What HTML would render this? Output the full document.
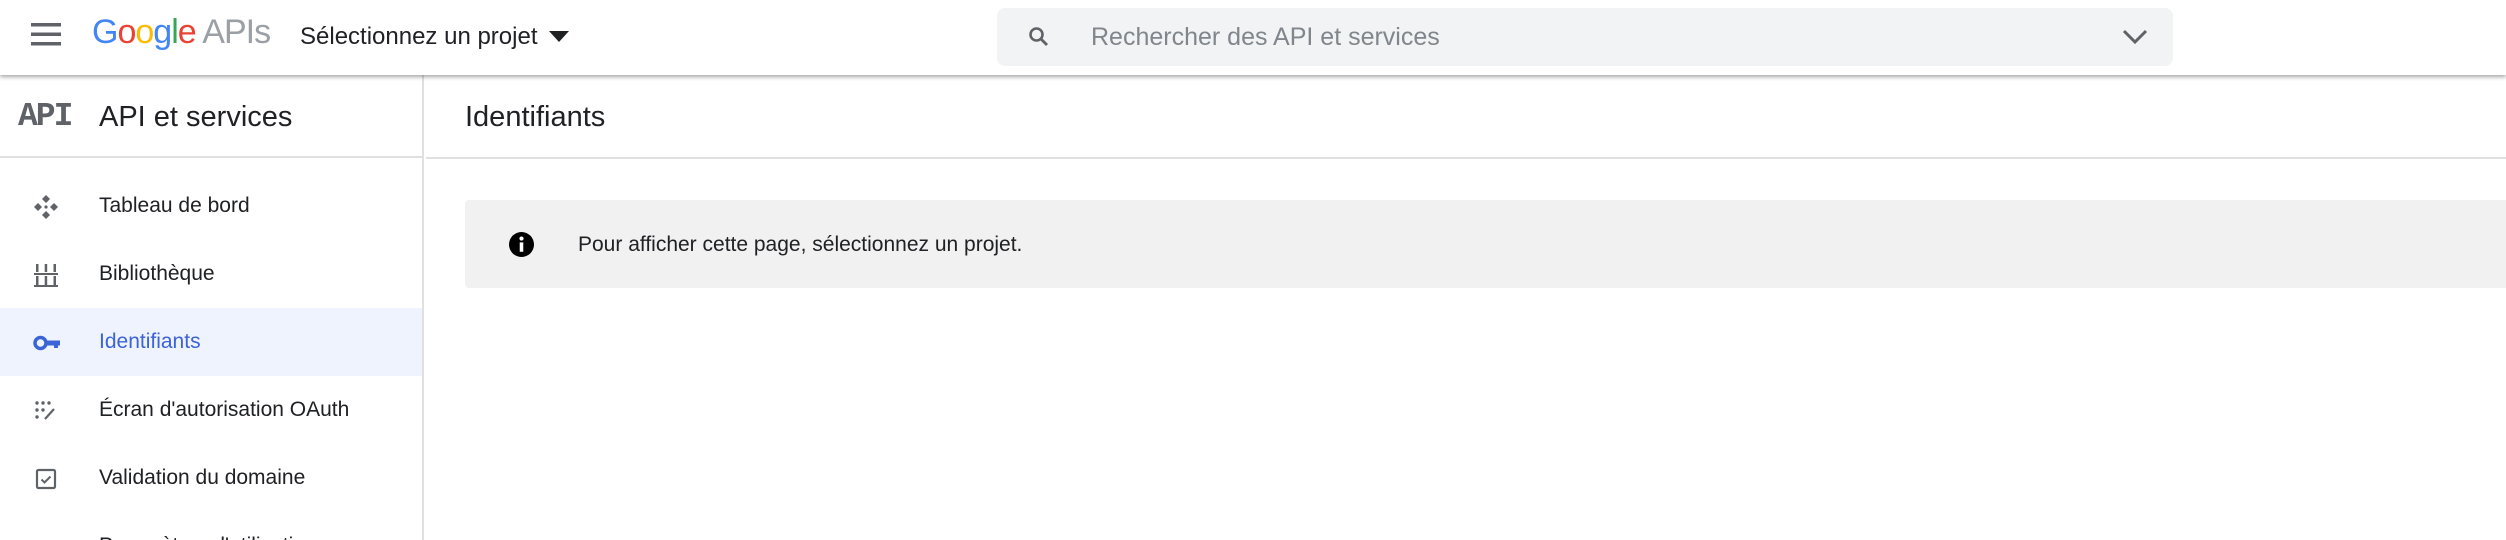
<!DOCTYPE html>
<html><head><meta charset="utf-8"><style>
*{margin:0;padding:0;box-sizing:border-box}
html,body{width:2506px;height:540px;overflow:hidden}
body{background:#fff;font-family:"Liberation Sans",Arial,sans-serif;position:relative;color:#202124}
.hdr{position:absolute;left:0;top:0;width:2506px;height:75px;background:#fff;box-shadow:0 2px 4px rgba(0,0,0,.35);z-index:2}
.abs{position:absolute}
.side{position:absolute;left:0;top:75px;width:424px;height:465px;border-right:2px solid #e0e0e0;overflow:hidden}
.nav{position:absolute;left:0;width:422px;height:68px;font-size:21px;line-height:68px;padding-left:99px;color:#202124;white-space:nowrap}
.nav svg{position:absolute;left:33px;top:22px}
</style></head><body>
<div class="hdr">
  <svg class="abs" style="left:31px;top:22px" width="30" height="24" viewBox="0 0 30 24"><rect y="1" width="30" height="3.5" fill="#5f6368"/><rect y="10.5" width="30" height="3.5" fill="#5f6368"/><rect y="20" width="30" height="3.5" fill="#5f6368"/></svg>
  <div class="abs" style="left:92px;top:13px;font-size:34px;letter-spacing:-1px;line-height:38px"><span style="color:#4285f4">G</span><span style="color:#ea4335">o</span><span style="color:#fbbc05">o</span><span style="color:#4285f4">g</span><span style="color:#34a853">l</span><span style="color:#ea4335">e</span> <span style="color:#9aa0a6">APIs</span></div>
  <div class="abs" style="left:300px;top:22px;font-size:24px;line-height:30px;color:#202124">Sélectionnez un projet</div>
  <svg class="abs" style="left:549px;top:31px" width="20" height="11"><path d="M0 0h20L10 11z" fill="#202124"/></svg>
  <div class="abs" style="left:997px;top:8px;width:1176px;height:58px;background:#f1f3f4;border-radius:8px">
    <svg class="abs" style="left:30px;top:17px" width="24" height="24" viewBox="0 0 24 24"><circle cx="9.5" cy="9.5" r="6" stroke="#5f6368" stroke-width="2.6" fill="none"/><path d="M14 14l6 6" stroke="#5f6368" stroke-width="2.8"/></svg>
    <div class="abs" style="left:94px;top:15px;font-size:25px;line-height:28px;color:#80868b">Rechercher des API et services</div>
    <svg class="abs" style="left:1125px;top:21px" width="26" height="16"><path d="M2 2l11 11L24 2" stroke="#5f6368" stroke-width="3" fill="none"/></svg>
  </div>
</div>
<div class="side">
  <div class="abs" style="left:0;top:0;width:422px;height:83px;border-bottom:2px solid #e0e0e0"></div>
  <div class="abs" style="left:18px;top:23px;font-family:'Liberation Mono',monospace;font-weight:bold;font-size:33px;color:#5f6368;letter-spacing:-2px;line-height:38px">API</div>
  <div class="abs" style="left:99px;top:24px;font-size:29px;line-height:36px">API et services</div>
  <div class="nav" style="top:97px"><svg width="26" height="26" viewBox="0 0 26 26" fill="#5f6368"><path d="M13 1l4 4-4 4-4-4z M1 13l4-4 4 4-4 4z M25 13l-4-4-4 4 4 4z M13 25l4-4-4-4-4 4z"/><circle cx="13" cy="13" r="1.6"/></svg>Tableau de bord</div>
  <div class="nav" style="top:165px"><svg width="26" height="26" viewBox="0 0 26 26" fill="#5f6368"><rect x="3" y="2" width="2.5" height="8"/><rect x="11.7" y="2" width="2.5" height="8"/><rect x="20.5" y="2" width="2.5" height="8"/><rect x="1" y="11" width="24" height="2"/><rect x="3" y="14" width="2.5" height="9"/><rect x="11.7" y="14" width="2.5" height="9"/><rect x="20.5" y="14" width="2.5" height="9"/><rect x="1" y="23" width="24" height="2"/></svg>Bibliothèque</div>
  <div class="nav" style="top:233px;background:#eef3fd;color:#3c63d8"><svg width="28" height="26" viewBox="0 0 28 26" fill="#3b65d6"><circle cx="7.5" cy="13" r="5.5" stroke="#3b65d6" stroke-width="3.5" fill="none"/><rect x="12" y="10.5" width="15" height="5"/><rect x="21" y="14" width="4" height="4"/></svg>Identifiants</div>
  <div class="nav" style="top:301px"><svg width="26" height="26" viewBox="0 0 26 26" fill="#5f6368"><circle cx="4" cy="5" r="1.7"/><circle cx="10" cy="5" r="1.7"/><circle cx="16" cy="5" r="1.7"/><circle cx="4" cy="12" r="1.7"/><circle cx="10" cy="12" r="1.7"/><circle cx="4" cy="19" r="1.7"/><path d="M12 21l9-10" stroke="#5f6368" stroke-width="2.2"/></svg>Écran d'autorisation OAuth</div>
  <div class="nav" style="top:369px"><svg width="26" height="26" viewBox="0 0 26 26"><rect x="4" y="4" width="18" height="18" rx="1.5" stroke="#5f6368" stroke-width="2.2" fill="none"/><path d="M8.5 13.5l3 3 6-6" stroke="#5f6368" stroke-width="2" fill="none"/></svg>Validation du domaine</div>
  <div class="nav" style="top:437px"><svg width="26" height="26" viewBox="0 0 26 26"><rect x="4" y="7" width="18" height="3" fill="#5f6368"/></svg>Paramètres d'utilisation</div>
</div>
<div class="abs" style="left:465px;top:99px;font-size:29px;line-height:36px">Identifiants</div>
<div class="abs" style="left:426px;top:157px;width:2080px;height:2px;background:#e0e0e0"></div>
<div class="abs" style="left:465px;top:200px;width:2041px;height:88px;background:#f1f1f1;border-radius:4px 0 0 4px">
  <svg class="abs" style="left:44px;top:32px" width="25" height="25" viewBox="0 0 24 24"><circle cx="12" cy="12" r="12" fill="#000"/><rect x="10.3" y="10" width="3.4" height="9" fill="#fff"/><circle cx="12" cy="6.3" r="2" fill="#fff"/></svg>
  <div class="abs" style="left:113px;top:32px;font-size:21px;line-height:25px">Pour afficher cette page, sélectionnez un projet.</div>
</div>
</body></html>
